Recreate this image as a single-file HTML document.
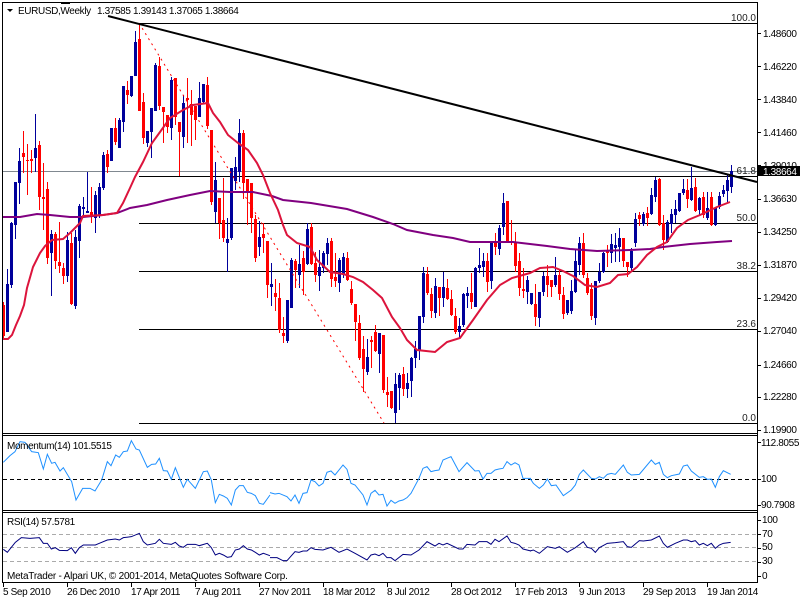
<!DOCTYPE html>
<html lang="en"><head><meta charset="utf-8"><title>EURUSD Weekly</title>
<style>
html,body{margin:0;padding:0;background:#fff;width:800px;height:600px;overflow:hidden}
svg{display:block}
text{font-family:"Liberation Sans",sans-serif;font-size:10px;fill:#000;letter-spacing:-.37px}
.l{fill:#222;letter-spacing:0}
.f{letter-spacing:-.23px}
.z polyline{vector-effect:non-scaling-stroke;fill:none}
</style></head><body>
<svg width="800" height="600" viewBox="0 0 800 600" xmlns="http://www.w3.org/2000/svg">
<rect width="800" height="600" fill="#fff"/>
<g shape-rendering="crispEdges">
<path stroke="#808890" d="M3 171.5H757" fill="none"/>
<path stroke="#000" fill="none" d="M139 23.5H757M139 176.5H757M139 223.5H757M139 271.5H757M139 329.5H757M139 423.5H757"/>
<!-- blue wicks -->
<path stroke="#00009b" fill="none" d="M7.5 269V332M11.5 222V288M15.5 182V239M19.5 148V204M35.5 114V172M51.5 230V296M67.5 232V282M75.5 230V309M79.5 204V258M83.5 197V215M87.5 172V213M95.5 191V233M99.5 183V218M103.5 152V190M111.5 128V161M119.5 118V148M123.5 86V132M131.5 76V97M135.5 31V76M147.5 131V147M151.5 108V158M155.5 63V111M171.5 77V140M183.5 95V148M199.5 82V117M203.5 84V103M215.5 162V223M227.5 218V272M231.5 168V240M235.5 157V190M239.5 119V182M259.5 221V256M271.5 263V306M287.5 300V343M291.5 258V308M299.5 245V288M307.5 223V265M319.5 250V291M323.5 251V273M327.5 238V265M339.5 258V292M343.5 253V278M367.5 339V375M379.5 333V373M395.5 373V423M399.5 373V410M407.5 373V398M411.5 357V397M415.5 341V368M419.5 316V360M423.5 267V323M435.5 278V318M443.5 272V307M459.5 318V338M463.5 293V327M467.5 287V308M475.5 267V307M479.5 248V273M483.5 253V277M491.5 241V289M499.5 225V255M503.5 193V235M527.5 276V304M531.5 293V305M539.5 292V327M543.5 272V296M555.5 257V287M567.5 300V315M571.5 280V314M575.5 250V293M579.5 237V275M595.5 281V325M599.5 263V283M603.5 252V273M611.5 234V263M615.5 233V262M619.5 228V262M631.5 248V272M635.5 213V247M643.5 212V226M651.5 188V215M655.5 177V202M667.5 220V243M671.5 209V233M675.5 200V223M679.5 193V212M683.5 179V195M691.5 167V201M699.5 197V215M707.5 192V220M715.5 207V226M719.5 192V209M723.5 185V197M727.5 175V203M731.5 165V193"/>
<!-- blue bodies -->
<path stroke="#00009b" stroke-width="3" fill="none" d="M7.5 284V332M11.5 223V285M15.5 182V225M19.5 161V183M35.5 148V158M51.5 234V253M67.5 240V276M75.5 237V306M79.5 206V241M83.5 207V209M87.5 211V213M95.5 195V218M99.5 187V216M103.5 155V188M111.5 128V161M119.5 120V148M123.5 86V122M131.5 76V96M135.5 42V76M147.5 131V143M151.5 108V132M155.5 65V111M171.5 80V128M183.5 103V137M199.5 98V117M203.5 84V102M215.5 180V212M227.5 239V243M231.5 168V238M235.5 167V181M239.5 133V172M259.5 237V247M271.5 284V287M287.5 300V341M291.5 260V308M299.5 264V275M307.5 229V264M319.5 267V276M323.5 253V268M327.5 243V254M339.5 260V283M343.5 257V275M367.5 357V372M379.5 333V354M395.5 384V413M399.5 375V388M407.5 383V389M411.5 358V381M415.5 349V358M419.5 316V351M423.5 273V317M435.5 286V313M443.5 287V298M459.5 326V332M463.5 294V325M467.5 293V296M475.5 268V307M479.5 265V268M483.5 261V267M491.5 242V281M499.5 228V249M503.5 203V227M527.5 280V292M531.5 293V304M539.5 292V318M543.5 276V292M555.5 275V285M567.5 300V313M571.5 291V311M575.5 261V292M579.5 243V265M595.5 281V318M599.5 272V281M603.5 253V272M611.5 244V253M615.5 245V248M619.5 238V247M631.5 251V268M635.5 219V243M643.5 214V224M651.5 195V214M655.5 180V197M667.5 222V242M671.5 214V224M675.5 209V215M679.5 193V211M683.5 189V193M691.5 188V200M699.5 198V210M707.5 208V218M715.5 208V225M719.5 196V207M723.5 190V194M727.5 180V191M731.5 171V187"/>
<!-- red wicks -->
<path stroke="#f00" fill="none" d="M3.5 302V340M23.5 131V173M27.5 144V195M31.5 150V173M39.5 141V210M43.5 163V230M47.5 182V264M55.5 232V269M59.5 222V273M63.5 263V284M71.5 233V305M91.5 187V223M107.5 150V173M115.5 118V145M127.5 81V104M139.5 23V111M143.5 93V144M159.5 57V110M163.5 107V143M167.5 115V133M175.5 78V125M179.5 122V176M187.5 78V143M191.5 90V146M195.5 106V140M207.5 77V129M211.5 130V205M219.5 198V239M223.5 178V242M243.5 130V199M247.5 179V225M251.5 183V233M255.5 215V262M263.5 223V253M267.5 241V298M275.5 279V311M279.5 283V333M283.5 317V343M295.5 259V288M303.5 251V295M311.5 223V265M315.5 252V282M331.5 238V287M335.5 253V287M347.5 252V281M351.5 281V305M355.5 304V341M359.5 315V360M363.5 336V392M371.5 336V368M375.5 325V352M383.5 335V393M387.5 377V407M391.5 391V409M403.5 367V396M427.5 267V295M431.5 288V318M439.5 287V316M447.5 279V300M451.5 290V316M455.5 308V334M471.5 273V309M487.5 253V292M495.5 233V255M507.5 201V243M511.5 220V245M515.5 232V272M519.5 253V296M523.5 268V298M535.5 284V326M547.5 265V297M551.5 280V297M559.5 270V300M563.5 287V319M583.5 233V278M587.5 273V295M591.5 283V320M607.5 245V267M623.5 238V267M627.5 262V277M639.5 212V226M647.5 207V226M659.5 178V226M663.5 215V250M687.5 179V208M695.5 178V212M703.5 192V218M711.5 192V226"/>
<!-- red bodies -->
<path stroke="#f00" stroke-width="3" fill="none" d="M3.5 305V336M23.5 153V157M27.5 160V161M31.5 159V161M39.5 145V197M43.5 197V199M47.5 189V258M55.5 234V261M59.5 262V266M63.5 268V276M71.5 243V304M91.5 212V217M107.5 154V167M115.5 128V142M127.5 90V95M139.5 39V111M143.5 102V138M159.5 66V106M163.5 107V112M167.5 115V127M175.5 78V117M179.5 122V132M187.5 98V100M191.5 104V115M195.5 106V120M207.5 85V126M211.5 130V202M219.5 198V223M223.5 220V238M243.5 133V183M247.5 179V193M251.5 183V218M255.5 219V258M263.5 234V238M267.5 241V285M275.5 293V297M279.5 298V330M283.5 333V336M295.5 261V270M303.5 258V272M311.5 227V264M315.5 263V275M331.5 241V279M335.5 277V281M347.5 258V280M351.5 289V303M355.5 304V322M359.5 323V358M363.5 349V369M371.5 340V342M375.5 332V351M383.5 335V390M387.5 392V395M391.5 391V408M403.5 374V389M427.5 274V293M431.5 294V311M439.5 287V298M447.5 288V299M451.5 299V315M455.5 316V332M471.5 293V302M487.5 261V282M495.5 241V247M507.5 201V242M511.5 241V243M515.5 242V266M519.5 261V288M523.5 289V291M535.5 304V317M547.5 276V285M551.5 280V287M559.5 275V294M563.5 295V314M583.5 243V275M587.5 278V293M591.5 289V316M607.5 251V253M623.5 238V261M627.5 262V267M639.5 215V219M647.5 213V218M659.5 179V225M663.5 223V240M687.5 190V199M695.5 187V211M703.5 197V215M711.5 197V225"/>
</g>
<!-- dotted fib line -->
<path d="M139 23L384 423" stroke="#f00" stroke-dasharray="2 4" fill="none"/>
<!-- MA lines -->
<polyline fill="none" stroke="#800080" stroke-width="2" points="3,217 20,217 37,214 50,215 70,217 83,217 103,215 117,213 130,208 147,205 167,200 190,195 210,191 230,192 253,192 272,196 283,200 311,203 347,209 373,217 393,224 407,230 433,235 453,238 470,242 493,242 513,242 530,244 547,246 570,249 597,251 630,250 650,249 663,247 690,244 717,242 732,241"/>
<polyline fill="none" stroke="#dc143c" stroke-width="2" points="3,339 8,339 12,335 16,325 20,316 24,305 27,288 33,267 40,253 45,246 52,240 63,239 70,233 80,223 83,216 103,215 117,213 123,203 130,188 135,177 143,162 152,143 160,132 170,118 183,110 193,105 208,103 213,113 220,122 228,135 238,143 248,150 257,163 263,175 270,193 278,210 283,225 287,235 297,243 310,247 317,260 330,272 343,274 353,277 363,282 373,290 382,298 392,317 400,328 407,340 417,350 435,352 447,342 460,338 473,320 487,300 500,285 512,278 530,273 540,268 553,267 563,271 573,276 585,285 597,287 610,283 618,275 628,274 637,267 647,255 657,247 667,242 677,228 688,220 700,215 717,207 730,202"/>
<!-- trendline -->
<path d="M108 16L757 182" stroke="#000" stroke-width="2" fill="none"/>
<!-- frames -->
<g shape-rendering="crispEdges" fill="none" stroke="#000">
<path d="M2.5 2.5H757.5V582.5H2.5ZM2.5 433.5H757.5M2.5 435.5H757.5M2.5 510.5H757.5M2.5 512.5H757.5"/>
<path d="M61 3.5H70"/>
<path d="M757 33.5H761M757 66.5H761M757 99.5H761M757 132.5H761M757 165.5H761M757 199.5H761M757 232.5H761M757 265.5H761M757 298.5H761M757 331.5H761M757 365.5H761M757 397.5H761M757 430.5H761M757 442.5H761M757 479.5H761M757 505.5H761M757 520.5H761M757 534.5H761M757 548.5H761M757 562.5H761M757 576.5H761"/>
<path d="M3.5 582V587M67.5 582V587M131.5 582V587M195.5 582V587M259.5 582V587M323.5 582V587M387.5 582V587M451.5 582V587M515.5 582V587M579.5 582V587M643.5 582V587M707.5 582V587"/>
<path d="M3 479.5H757" stroke-dasharray="4 3"/>
<path stroke="#aaa" d="M3 534.5H757M3 547.5H757M3 561.5H757" stroke-dasharray="4 3"/>
</g>
<path d="M7 9L13 9L10 12Z" fill="#000"/>
<!-- indicators -->
<g class="z" transform="translate(0 425) scale(.33333)">
<polyline stroke="#1e90ff" points="10,112 30,92 45,80 60,50 75,52 95,80 115,83 130,132 142,88 155,115 165,112 180,138 190,128 215,170 228,225 248,190 270,190 285,198 305,165 322,110 333,122 347,90 358,97 370,80 382,78 394,47 408,72 418,75 442,127 455,118 467,117 478,100 490,137 502,138 514,163 526,128 550,187 562,163 586,190 610,140 622,138 634,165 646,233 658,208 670,213 682,220 694,240 706,195 718,182 730,182 742,202 754,205 766,212 778,235 790,238 810,210"/>
<polyline stroke="#1e90ff" transform="translate(795 0)" points="15,203 30,207 42,205 66,215 78,228 90,210 102,235 114,205 126,203 138,165 150,170 162,183 174,175 186,142 198,138 210,150 234,120 246,133 258,175 270,180 294,210 306,240 318,205 330,196 342,210 354,208 366,243 378,226 390,235 402,228 414,225 426,218 438,205 462,160 474,130 486,125 498,140 510,137 522,135 534,105 546,100 558,95 582,140 606,113 630,138 642,137 654,162 666,145 678,145 690,135 702,132 714,130 726,110 738,120 750,113 762,120 774,160 786,160 798,160"/>
<polyline stroke="#1e90ff" transform="translate(1590 0)" points="0,160 10,175 28,190 40,180 52,162 64,182 78,180 100,212 124,195 136,180 148,148 160,135 184,160 196,162 208,155 220,160 232,148 244,145 256,148 280,120 292,142 304,150 328,148 364,105 376,118 388,112 400,148 412,158 424,152 448,147 460,123 472,120 484,138 508,157 520,155 532,163 544,162 556,187 568,155 580,137 592,143 602,148"/>
<polyline stroke="#000080" points="10,373 22,382 46,352 64,338 90,340 118,338 130,355 142,355 154,372 166,368 178,376 202,377 214,368 226,385 238,368 250,360 286,360 298,355 322,345 346,342 358,345 370,338 394,335 418,325 430,350 442,360 466,355 478,343 490,355 514,358 526,352 538,363 550,367 562,358 586,358 598,362 622,355 634,368 646,390 658,385 670,390 682,397 694,395 706,375 718,372 730,362 742,372 754,375 766,382 778,390 790,385 810,392"/>
<polyline stroke="#000080" transform="translate(795 0)" points="15,398 36,398 54,407 66,407 90,380 102,382 114,378 126,378 138,368 150,373 174,375 198,367 222,382 246,372 270,385 306,405 318,390 330,387 342,392 354,385 366,398 378,398 390,407 414,388 438,390 462,375 486,350 510,363 522,355 534,360 546,355 582,372 594,372 606,358 630,360 642,350 666,350 678,358 690,343 702,350 726,333 738,352 750,355 762,360 774,372 798,378"/>
<polyline stroke="#000080" transform="translate(1590 0)" points="0,378 10,375 28,385 52,365 76,370 88,365 112,382 136,368 160,350 172,367 184,370 196,382 208,368 232,355 256,353 280,350 292,365 304,367 328,347 340,348 364,345 388,333 400,355 412,367 436,355 460,345 472,345 484,350 496,347 508,360 520,355 532,362 544,355 556,370 568,360 580,355 602,352"/>
</g>
<!-- header and labels -->
<text x="18" y="14">EURUSD,Weekly</text>
<text x="97" y="14">1.37585 1.39143 1.37065 1.38664</text>
<g text-anchor="end">
<text x="756" y="21" class="l">100.0</text>
<text x="756" y="174" class="l">61.8</text>
<text x="756" y="221" class="l">50.0</text>
<text x="756" y="269" class="l">38.2</text>
<text x="756" y="327" class="l">23.6</text>
<text x="756" y="421" class="l">0.0</text>
</g>
<text x="7" y="449">Momentum(14) 101.5515</text>
<text x="7" y="525">RSI(14) 57.5781</text>
<text x="7" y="579" class="f">MetaTrader - Alpari UK, © 2001-2014, MetaQuotes Software Corp.</text>
<g>
<text x="763" y="37">1.48600</text>
<text x="763" y="70">1.46220</text>
<text x="763" y="103">1.43840</text>
<text x="763" y="136">1.41460</text>
<text x="763" y="169">1.39010</text>
<text x="763" y="202">1.36630</text>
<text x="763" y="235">1.34250</text>
<text x="763" y="268">1.31870</text>
<text x="763" y="301">1.29420</text>
<text x="763" y="334">1.27040</text>
<text x="763" y="368">1.24660</text>
<text x="763" y="400">1.22280</text>
<text x="763" y="433">1.19900</text>
<text x="761" y="446">112.8055</text>
<text x="761" y="482">100</text>
<text x="761" y="508">90.7908</text>
<text x="762" y="523">100</text>
<text x="762" y="537">70</text>
<text x="762" y="550">50</text>
<text x="762" y="564">30</text>
<text x="762" y="579">0</text>
</g>
<rect x="758" y="166" width="42" height="10" fill="#000"/>
<text x="763" y="175" style="fill:#fff">1.38664</text>
<g>
<text x="3" y="595">5 Sep 2010</text>
<text x="67" y="595">26 Dec 2010</text>
<text x="131" y="595">17 Apr 2011</text>
<text x="195" y="595">7 Aug 2011</text>
<text x="259" y="595">27 Nov 2011</text>
<text x="323" y="595">18 Mar 2012</text>
<text x="387" y="595">8 Jul 2012</text>
<text x="451" y="595">28 Oct 2012</text>
<text x="515" y="595">17 Feb 2013</text>
<text x="579" y="595">9 Jun 2013</text>
<text x="643" y="595">29 Sep 2013</text>
<text x="707" y="595">19 Jan 2014</text>
</g>
</svg>
</body></html>
